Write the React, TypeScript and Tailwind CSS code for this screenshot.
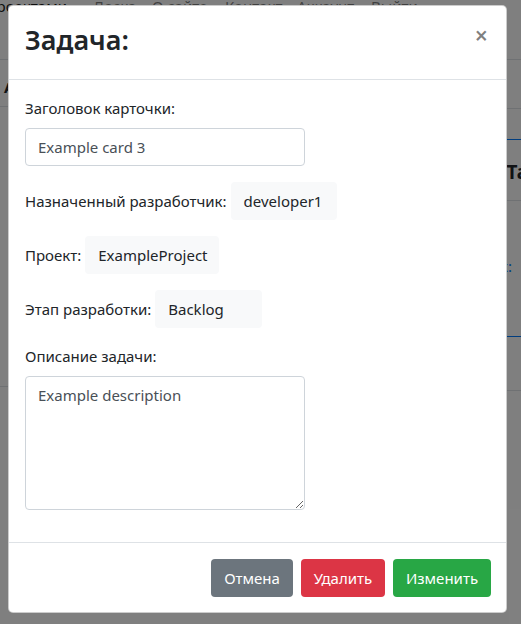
import React from 'react';

const font = "font-['Noto_Sans','Open_Sans',sans-serif]";

function Background() {
  return (
    <div className="absolute inset-0 bg-white">
      {/* navbar */}
      <div className="h-[66px] border-b border-[#dee2e6]">
        <div className="-mt-[6px] flex items-center whitespace-nowrap text-[15px] leading-[24px] text-black/50">
          <div className="flex w-[93px] justify-start">
            <div className="flex w-[67px] justify-end">
              <span className="text-black/90">Управление проектами</span>
            </div>
          </div>
          <span className="w-[59px]">Доска</span>
          <span className="w-[73px]">О сайте</span>
          <span className="w-[72px]">Контакт</span>
          <span className="w-[74px]">Аккаунт</span>
          <span>Выйти</span>
        </div>
      </div>
      <div className="grid grid-cols-2">
        <div className="flex flex-col">
          <div className="flex h-[47px] items-end border-b border-[#dee2e6] pb-[8px] pl-[4px] text-[15px] font-bold text-[#212529]">
            А
          </div>
          <div className="h-[280px] border-b border-[#dee2e6]" />
        </div>
        <div className="flex flex-col items-stretch">
          <div className="h-[49px] border-b border-[#dee2e6]" />
          <div className="h-[31px] border-b border-[#007bff]" />
          <div className="flex h-[61px] items-center justify-start whitespace-nowrap border-b border-[#dee2e6] pl-[246px] text-[19px] font-bold text-[#212529]">
            <span className="pt-[4px]">Таски</span>
          </div>
          <div className="flex h-[136px] items-center justify-end border-b border-[#007bff] pr-[9px] text-[15px] text-[#007bff]">
            <span className="pb-[4px]">Разработчик:</span>
          </div>
          <div className="h-[54px] border-b border-[#dee2e6]" />
        </div>
      </div>
    </div>
  );
}

function InfoRow({ label, value, width }: { label: string; value: string; width: string }) {
  return (
    <div className="mb-4 flex items-center gap-1">
      <span className="leading-[24px]">{label}</span>
      <div className={`flex h-[38px] items-center rounded-[4px] bg-[#f8f9fa] px-[13px] ${width}`}>
        {value}
      </div>
    </div>
  );
}

export default function App() {
  return (
    <div className={`relative h-[624px] w-full overflow-hidden ${font} text-[15px] text-[#212529]`}>
      <Background />
      <div className="absolute inset-0 bg-black/50" />

      <div className="absolute left-[8px] top-[5px] w-[499px] rounded-[5px] border border-black/20 bg-white">
        {/* header */}
        <div className="flex h-[74px] items-start justify-between border-b border-[#dee2e6] pl-4 pr-[18px]">
          <h3 className="mt-[16px] text-[27px] font-semibold leading-[36px]">Задача:</h3>
          <button className="mt-[11px] text-[23px] font-semibold leading-[36px] text-black/50">×</button>
        </div>

        {/* body */}
        <div className="p-4">
          <div className="mb-4">
            <label className="mb-2 block leading-[24px]">Заголовок карточки:</label>
            <input
              defaultValue="Example card 3"
              className="block h-[38px] w-[280px] rounded-[4px] border border-[#ced4da] px-3 text-[#495057] outline-none"
            />
          </div>

          <InfoRow label="Назначенный разработчик:" value="developer1" width="w-[106px]" />
          <InfoRow label="Проект:" value="ExampleProject" width="w-[134px]" />
          <InfoRow label="Этап разработки:" value="Backlog" width="w-[107px]" />

          <div className="mb-4">
            <label className="mb-2 block leading-[24px]">Описание задачи:</label>
            <textarea
              defaultValue="Example description"
              className="block h-[134px] w-[280px] rounded-[4px] border border-[#ced4da] px-3 py-[6px] leading-[24px] text-[#495057] outline-none"
            />
          </div>
        </div>

        {/* footer */}
        <div className="flex items-center justify-end gap-2 border-t border-[#dee2e6] pb-[15px] pl-4 pr-[15px] pt-4">
          <button className="h-[38px] w-[82px] rounded-[4px] bg-[#6c757d] text-white">Отмена</button>
          <button className="h-[38px] w-[84px] rounded-[4px] bg-[#dc3545] text-white">Удалить</button>
          <button className="h-[38px] w-[98px] rounded-[4px] bg-[#28a745] text-white">Изменить</button>
        </div>
      </div>
    </div>
  );
}
